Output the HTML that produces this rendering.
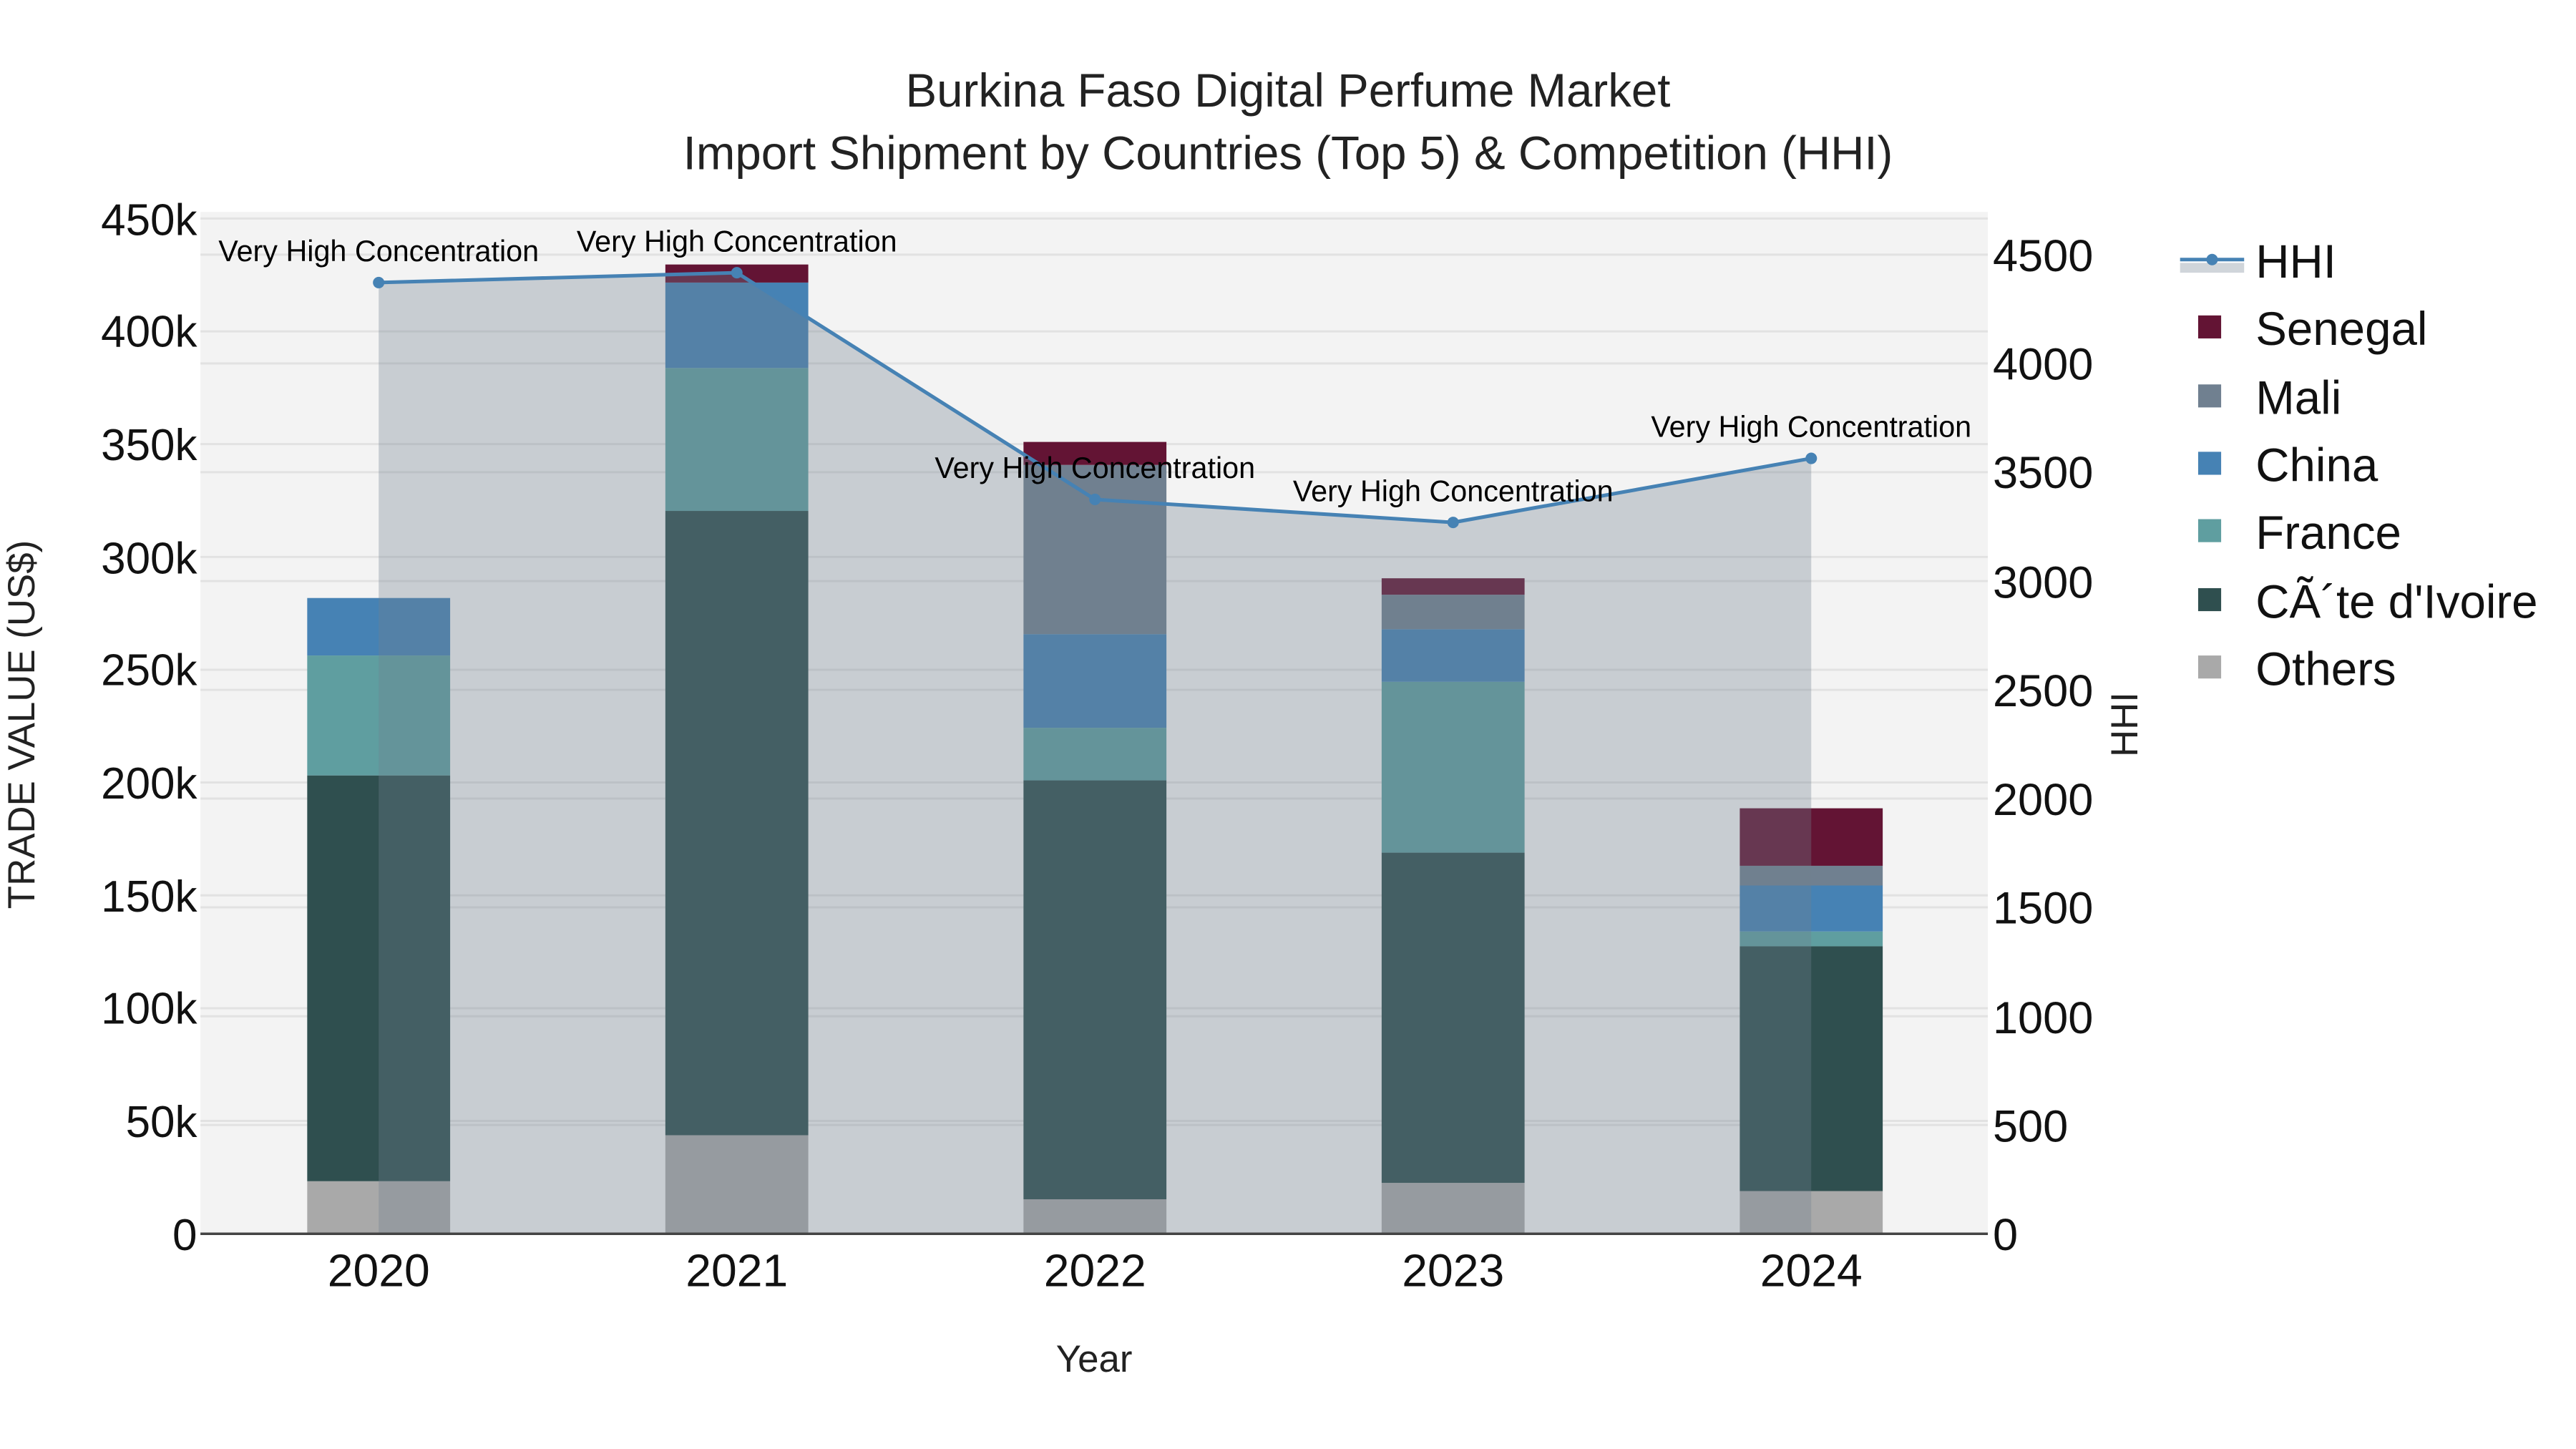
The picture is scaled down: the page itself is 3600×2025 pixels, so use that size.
<!DOCTYPE html>
<html><head><meta charset="utf-8"><style>html,body{margin:0;padding:0;background:#fff}svg{display:block}</style></head><body>
<svg width="3600" height="2025" viewBox="0 0 1568 882" xmlns="http://www.w3.org/2000/svg" font-family="Liberation Sans, sans-serif">
<rect width="1568" height="882" fill="#fff"/>
<rect x="122" y="129" width="1088" height="622" fill="#f3f3f3"/>
<g stroke="#e2e2e2" stroke-width="1.3">
<line x1="122" x2="1210" y1="133" y2="133"/><line x1="122" x2="1210" y1="201.7" y2="201.7"/><line x1="122" x2="1210" y1="270.3" y2="270.3"/><line x1="122" x2="1210" y1="339" y2="339"/><line x1="122" x2="1210" y1="407.7" y2="407.7"/><line x1="122" x2="1210" y1="476.3" y2="476.3"/><line x1="122" x2="1210" y1="545" y2="545"/><line x1="122" x2="1210" y1="613.7" y2="613.7"/><line x1="122" x2="1210" y1="682.3" y2="682.3"/>
<line x1="122" x2="1210" y1="155" y2="155"/><line x1="122" x2="1210" y1="221.2" y2="221.2"/><line x1="122" x2="1210" y1="287.4" y2="287.4"/><line x1="122" x2="1210" y1="353.7" y2="353.7"/><line x1="122" x2="1210" y1="419.9" y2="419.9"/><line x1="122" x2="1210" y1="486.1" y2="486.1"/><line x1="122" x2="1210" y1="552.3" y2="552.3"/><line x1="122" x2="1210" y1="618.6" y2="618.6"/><line x1="122" x2="1210" y1="684.8" y2="684.8"/>
</g>
<g>
<rect x="187" y="719" width="87" height="32" fill="#a9a9a9"/><rect x="187" y="472" width="87" height="247" fill="#2f4f4f"/><rect x="187" y="399" width="87" height="73" fill="#5f9ea0"/><rect x="187" y="364" width="87" height="35" fill="#4682b4"/>
<rect x="405" y="691" width="87" height="60" fill="#a9a9a9"/><rect x="405" y="311" width="87" height="380" fill="#2f4f4f"/><rect x="405" y="224" width="87" height="87" fill="#5f9ea0"/><rect x="405" y="172" width="87" height="52" fill="#4682b4"/><rect x="405" y="161" width="87" height="11" fill="#631434"/>
<rect x="623" y="730" width="87" height="21" fill="#a9a9a9"/><rect x="623" y="475" width="87" height="255" fill="#2f4f4f"/><rect x="623" y="443" width="87" height="32" fill="#5f9ea0"/><rect x="623" y="386" width="87" height="57" fill="#4682b4"/><rect x="623" y="283" width="87" height="103" fill="#708090"/><rect x="623" y="269" width="87" height="14" fill="#631434"/>
<rect x="841" y="720" width="87" height="31" fill="#a9a9a9"/><rect x="841" y="519" width="87" height="201" fill="#2f4f4f"/><rect x="841" y="415" width="87" height="104" fill="#5f9ea0"/><rect x="841" y="383" width="87" height="32" fill="#4682b4"/><rect x="841" y="362" width="87" height="21" fill="#708090"/><rect x="841" y="352" width="87" height="10" fill="#631434"/>
<rect x="1059" y="725" width="87" height="26" fill="#a9a9a9"/><rect x="1059" y="576" width="87" height="149" fill="#2f4f4f"/><rect x="1059" y="567" width="87" height="9" fill="#5f9ea0"/><rect x="1059" y="539" width="87" height="28" fill="#4682b4"/><rect x="1059" y="527" width="87" height="12" fill="#708090"/><rect x="1059" y="492" width="87" height="35" fill="#631434"/>
</g>
<polygon points="230.5,751 230.5,172 448.5,166 666.5,304 884.5,318 1102.5,279 1102.5,751" fill="rgba(112,128,144,0.33)"/>
<line x1="122" x2="1210" y1="751" y2="751" stroke="#444" stroke-width="1.5"/>
<polyline points="230.5,172 448.5,166 666.5,304 884.5,318 1102.5,279" fill="none" stroke="#4682b4" stroke-width="2.2"/>
<g fill="#4682b4"><circle cx="230.5" cy="172" r="3.5"/><circle cx="448.5" cy="166" r="3.5"/><circle cx="666.5" cy="304" r="3.5"/><circle cx="884.5" cy="318" r="3.5"/><circle cx="1102.5" cy="279" r="3.5"/></g>
<g font-size="18" text-anchor="middle" fill="#000">
<text x="230.5" y="159">Very High Concentration</text><text x="448.5" y="153">Very High Concentration</text><text x="666.5" y="291">Very High Concentration</text><text x="884.5" y="305">Very High Concentration</text><text x="1102.5" y="266">Very High Concentration</text>
</g>
<g font-size="28.5" text-anchor="middle" fill="#222">
<text x="784" y="65">Burkina Faso Digital Perfume Market</text>
<text x="784" y="103">Import Shipment by Countries (Top 5) &amp; Competition (HHI)</text>
</g>
<g font-size="27" text-anchor="end" fill="#111">
<text x="120" y="143">450k</text><text x="120" y="211">400k</text><text x="120" y="280">350k</text><text x="120" y="349">300k</text><text x="120" y="417">250k</text><text x="120" y="486">200k</text><text x="120" y="555">150k</text><text x="120" y="623">100k</text><text x="120" y="692">50k</text><text x="120" y="761">0</text>
</g>
<g font-size="27.5" fill="#111">
<text x="1213" y="165">4500</text><text x="1213" y="231">4000</text><text x="1213" y="297">3500</text><text x="1213" y="364">3000</text><text x="1213" y="430">2500</text><text x="1213" y="496">2000</text><text x="1213" y="562">1500</text><text x="1213" y="629">1000</text><text x="1213" y="695">500</text><text x="1213" y="761">0</text>
</g>
<g font-size="28" text-anchor="middle" fill="#111">
<text x="230.5" y="783">2020</text><text x="448.5" y="783">2021</text><text x="666.5" y="783">2022</text><text x="884.5" y="783">2023</text><text x="1102.5" y="783">2024</text>
</g>
<text x="666" y="835" font-size="23" text-anchor="middle" fill="#222">Year</text>
<text transform="translate(21,441) rotate(-90)" font-size="23" text-anchor="middle" fill="#222">TRADE VALUE (US$)</text>
<text transform="translate(1301,441) rotate(-90)" font-size="23" text-anchor="middle" fill="#222">HHI</text>
<rect x="1327" y="160" width="39" height="6" fill="rgba(112,128,144,0.33)"/>
<line x1="1327" x2="1366" y1="158" y2="158" stroke="#4682b4" stroke-width="2.2"/><circle cx="1346.5" cy="158" r="3.5" fill="#4682b4"/>
<rect x="1338" y="192" width="14" height="14" fill="#631434"/>
<rect x="1338" y="234" width="14" height="14" fill="#708090"/>
<rect x="1338" y="275" width="14" height="14" fill="#4682b4"/>
<rect x="1338" y="316" width="14" height="14" fill="#5f9ea0"/>
<rect x="1338" y="358" width="14" height="14" fill="#2f4f4f"/>
<rect x="1338" y="399" width="14" height="14" fill="#a9a9a9"/>
<g font-size="28.5" fill="#111">
<text x="1373" y="169">HHI</text><text x="1373" y="210">Senegal</text><text x="1373" y="252">Mali</text><text x="1373" y="293">China</text><text x="1373" y="334">France</text><text x="1373" y="376">CÃ´te d'Ivoire</text><text x="1373" y="417">Others</text>
</g>
</svg>
</body></html>
